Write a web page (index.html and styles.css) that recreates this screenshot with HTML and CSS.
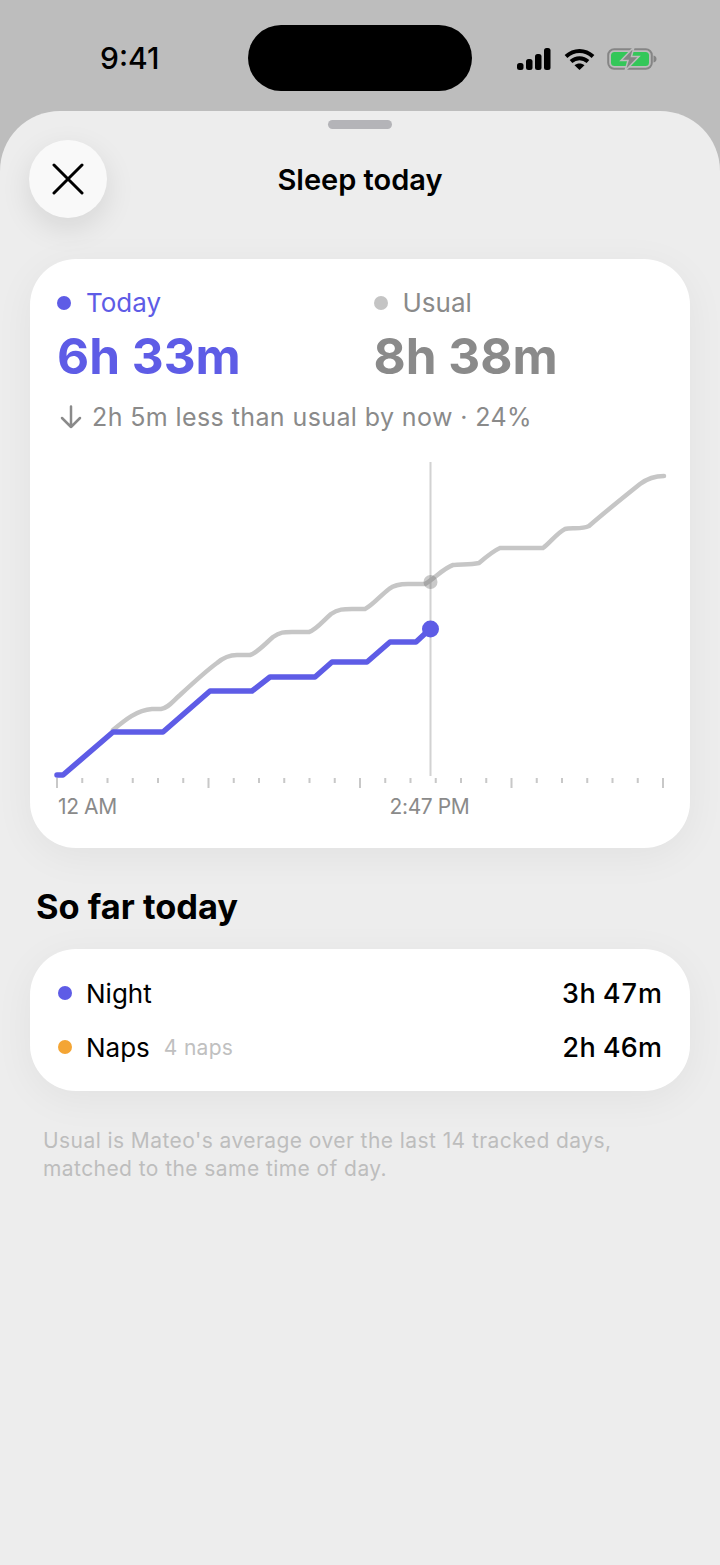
FILE: index.html
```html
<!DOCTYPE html>
<html lang="en">
<head>
    <meta charset="UTF-8">
    <meta name="viewport" content="width=device-width, initial-scale=1.0">
    <title>Sleep today</title>
    <link rel="stylesheet" href="styles.css">
</head>
<body>
    <div class="status-bar">
        <span class="clock">9:41</span>
        <div class="island"></div>
        <div class="status-icons">
            <svg width="35" height="23" viewBox="0 0 35 23">
                <rect x="0" y="15" width="6.500" height="7" rx="2.500"/>
                <rect x="9" y="11" width="6.500" height="11" rx="2.500"/>
                <rect x="18" y="6" width="6.500" height="16" rx="2.500"/>
                <rect x="27" y="0" width="6.500" height="22" rx="2.500"/>
            </svg>
            <svg width="31" height="23" viewBox="0 0 31 23">
                <path d="M2 8.500C10 1 21 1 29 8.500M7 13.500C12 9 19 9 24 13.500" fill="none" stroke="#000" stroke-width="4"/>
                <path d="M15.500 22L10.500 17.300C13.500 14.800 17.500 14.800 20.500 17.300Z"/>
            </svg>
            <svg width="50" height="24" viewBox="0 0 50 24">
                <rect x="1.200" y="2.200" width="43.600" height="19.600" rx="6" fill="none" stroke="#858585" stroke-width="2"/>
                <rect x="4" y="5" width="38" height="14" rx="3.500" fill="#34c759"/>
                <path d="M46.500 8.500C48.500 9 49.500 10.300 49.500 12C49.500 13.700 48.500 15 46.500 15.500Z" fill="#858585"/>
                <path d="M27 0L14 13.500H21L18 24L32 9.500H24.500Z" fill="#858585" stroke="#bdbdbd" stroke-width="1.500"/>
            </svg>
        </div>
    </div>

    <main class="sheet">
        <div class="handle"></div>
        <header class="sheet-header">
            <button class="close-btn" aria-label="Close">
                <svg width="32" height="32" viewBox="0 0 32 32">
                    <path d="M2 2L30 30M30 2L2 30" fill="none" stroke="#000" stroke-width="3" stroke-linecap="round"/>
                </svg>
            </button>
            <h1>Sleep today</h1>
        </header>

        <section class="card chart-card">
            <div class="totals">
                <div class="total total-today">
                    <div class="legend"><span class="dot"></span>Today</div>
                    <div class="value">6h 33m</div>
                </div>
                <div class="total total-usual">
                    <div class="legend"><span class="dot"></span>Usual</div>
                    <div class="value">8h 38m</div>
                </div>
            </div>
            <div class="delta">
                <svg width="22" height="24" viewBox="0 0 22 24">
                    <path d="M11 1.500V22M2 13L11 22L20 13" fill="none" stroke="#8a8a8a" stroke-width="2.500" stroke-linecap="round" stroke-linejoin="round"/>
                </svg>
                2h 5m less than usual by now · 24%
            </div>
            <svg class="chart" width="660" height="333" viewBox="0 0 660 333">
                <path class="now-line" d="M400.500 0V314"/>
                <path id="ticks" class="ticks"/>
                <path class="line-usual" d="M83 268C95 258 107 248 122 247H131C138 246 142 240 150 233C163 221 176 209 187 201C194 195 200 193 207 193H220C227 191 236 181 243 175C250 170 254 170 262 170H279C286 168 294 158 301 152C308 147 314 147 322 147H335C343 143 351 133 359 127C364 123 370 122 378 122H395C405 116 414 106 423 103C430 102 440 103 449 101C456 95 463 89 470 86H513C520 81 527 71 535 67C541 65 551 68 559 64C575 50 595 34 610 22C618 16 625 14 634 14"/>
                <path class="line-today" d="M27 313H33L83 270H133L180 229H222L240 215H285L302 200H337L360 180H386L400 167"/>
                <circle class="now-usual" cx="400.500" cy="120" r="7"/>
                <circle class="now-today" cx="400.500" cy="167" r="8.500"/>
            </svg>
            <div class="axis-labels">
                <span>12 AM</span>
                <span class="axis-now">2:47 PM</span>
            </div>
        </section>

        <h2>So far today</h2>

        <section class="card list-card">
            <div class="row">
                <span class="dot dot-night"></span>
                <span class="row-name">Night</span>
                <span class="row-time">3h 47m</span>
            </div>
            <div class="row">
                <span class="dot dot-naps"></span>
                <span class="row-name">Naps</span>
                <span class="row-note">4 naps</span>
                <span class="row-time">2h 46m</span>
            </div>
        </section>

        <p class="footnote">Usual is Mateo's average over the last 14 tracked days,<br>matched to the same time of day.</p>
    </main>

    <script>
        // 24 ticks along the bottom of the chart, every 6th one longer
        let d = "";
        for (let i = 0; i <= 24; i++) {
            const x = 27 + i * 25.25;
            const len = i % 6 === 0 ? 10 : 5;
            d += `M${x} 316v${len}`;
        }
        document.getElementById("ticks").setAttribute("d", d);
    </script>
</body>
</html>
```

FILE: styles.css
```css
* {
    box-sizing: border-box;
}

body {
    margin: 0;
    height: 1565px;
    overflow: hidden;
    font-family: 'Inter', 'Liberation Sans', sans-serif;
    background-color: #bdbdbd;
    display: flex;
    flex-direction: column;
}

.status-bar {
    height: 111px;
    flex-shrink: 0;
    padding: 25px 63px 0 100px;
    display: flex;
    align-items: flex-start;
}

.clock {
    width: 148px;
    height: 66px;
    line-height: 66px;
    font-size: 30px;
    font-weight: 500;
    color: #000;
}

.island {
    width: 224px;
    height: 66px;
    background-color: #000;
    border-radius: 33px;
}

.status-icons {
    display: flex;
    align-items: center;
    gap: 12px;
    margin-left: auto;
    margin-top: 22px;
}

.status-icons svg {
    display: block;
}

.sheet {
    flex: 1;
    background-color: #ededed;
    border-radius: 60px 60px 0 0;
    padding: 9px 30px 0;
}

.handle {
    width: 64px;
    height: 9px;
    margin: 0 auto;
    background-color: #b4b4b8;
    border-radius: 5px;
}

.sheet-header {
    position: relative;
    height: 78px;
    margin-top: 11px;
    display: flex;
    justify-content: center;
    align-items: center;
}

.sheet-header h1 {
    margin: 0;
    font-size: 29px;
    font-weight: 600;
    color: #000;
}

.close-btn {
    position: absolute;
    left: -1px;
    top: 0;
    width: 78px;
    height: 78px;
    border: none;
    border-radius: 50%;
    padding: 0;
    background-color: #f9f9f9;
    box-shadow: 0 10px 30px rgba(0, 0, 0, 0.1);
    display: flex;
    justify-content: center;
    align-items: center;
}

.card {
    background-color: #fff;
    border-radius: 46px;
    box-shadow: 0 8px 40px rgba(0, 0, 0, 0.05);
}

.chart-card {
    height: 589px;
    margin-top: 41px;
    padding-top: 28px;
}

.totals {
    display: flex;
    padding-left: 27px;
}

.total {
    width: 317px;
}

.legend {
    display: flex;
    align-items: center;
    gap: 15px;
    font-size: 26px;
    line-height: 32px;
}

.dot {
    width: 14px;
    height: 14px;
    border-radius: 50%;
    flex-shrink: 0;
}

.value {
    font-size: 49.500px;
    font-weight: 700;
    line-height: 60px;
    margin-top: 7px;
}

.total-today .legend,
.total-today .value {
    color: #5e5ce6;
}

.total-today .dot {
    background-color: #5e5ce6;
}

.total-usual .legend,
.total-usual .value {
    color: #8a8a8a;
}

.total-usual .dot {
    background-color: #c4c4c4;
}

.delta {
    display: flex;
    align-items: center;
    gap: 10px;
    margin-top: 15px;
    padding-left: 30px;
    font-size: 25px;
    line-height: 32px;
    letter-spacing: 0.4px;
    color: #8a8a8a;
}

.chart {
    display: block;
    margin-top: 29px;
}

.now-line {
    stroke: #d2d2d2;
    stroke-width: 2;
    fill: none;
}

.ticks {
    stroke: #c8c8c8;
    stroke-width: 2;
    fill: none;
}

.line-usual {
    stroke: #c6c6c6;
    stroke-width: 4.500;
    fill: none;
    stroke-linecap: round;
}

.line-today {
    stroke: #5e5ce6;
    stroke-width: 5.500;
    fill: none;
    stroke-linecap: round;
    stroke-linejoin: round;
}

.now-usual {
    fill: rgba(120, 120, 120, 0.4);
}

.now-today {
    fill: #5e5ce6;
}

.axis-labels {
    position: relative;
    padding-left: 28px;
    font-size: 21px;
    line-height: 24px;
    letter-spacing: -0.4px;
    color: #8a8a8a;
}

.axis-now {
    position: absolute;
    left: 399.500px;
    transform: translateX(-50%);
    white-space: nowrap;
}

h2 {
    margin: 37px 0 0 6px;
    font-size: 34.400px;
    line-height: 43px;
    font-weight: 700;
    color: #000;
}

.list-card {
    height: 142px;
    margin-top: 21px;
    padding: 17px 28px 0;
}

.row {
    display: flex;
    align-items: center;
    height: 54px;
}

.row-name {
    margin-left: 14px;
    font-size: 26px;
    color: #000;
}

.row-note {
    margin-left: 14px;
    font-size: 21px;
    color: #c0c0c0;
    letter-spacing: 0.3px;
}

.row-time {
    margin-left: auto;
    font-size: 27px;
    font-weight: 500;
    font-variant-numeric: tabular-nums;
    color: #000;
}

.dot-night {
    background-color: #5e5ce6;
}

.dot-naps {
    background-color: #f4a534;
}

.footnote {
    margin: 36px 0 0 13px;
    font-size: 21px;
    line-height: 28px;
    letter-spacing: 0.43px;
    color: #bdbdbd;
}
```
